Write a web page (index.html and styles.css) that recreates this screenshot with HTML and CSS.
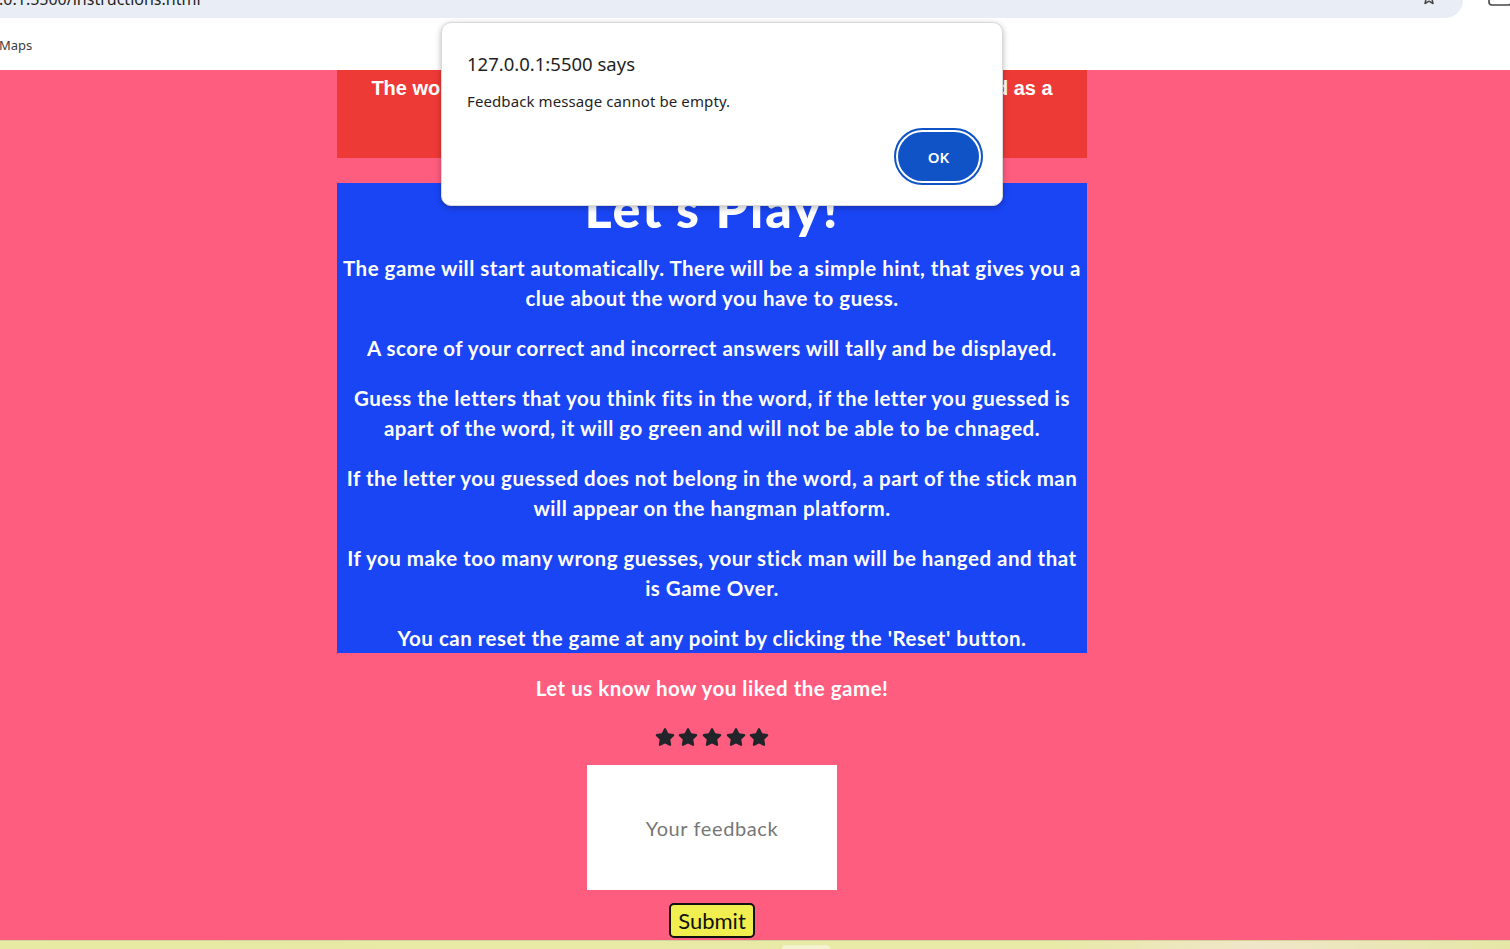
FILE: index.html
```html
<!DOCTYPE html>
<html lang="en">
<head>
<meta charset="utf-8">
<title>Instructions</title>
<link rel="stylesheet" href="styles.css">
</head>
<body>
<div class="screen">
  <div class="toolbar">
    <div class="omnibox">
      <span class="url">.0.1:5500/instructions.html</span>
      <svg class="bookmark-star" viewBox="0 0 16 16" aria-hidden="true"><path d="M8 1.5l1.9 4.1 4.5.5-3.4 3 1 4.4L8 11.2l-4 2.3 1-4.4-3.4-3 4.5-.5z" fill="none" stroke="#474747" stroke-width="1.5" stroke-linejoin="round"/></svg>
    </div>
    <svg class="side-icon" viewBox="0 0 22 18" aria-hidden="true"><rect x="1" y="-8" width="22" height="13" rx="3" fill="none" stroke="#474747" stroke-width="1.6"/></svg>
  </div>
  <div class="bookmarks"><span class="bookmark">Maps</span></div>

  <main class="page">
    <section class="intro">
      <p>The word that you need to guess will then be hidden and displayed as a<br>series of blank dashes.</p>
    </section>

    <section class="rules">
      <h1>Let's Play!</h1>
      <p>The game will start automatically. There will be a simple hint, that gives you a<br>clue about the word you have to guess.</p>
      <p>A score of your correct and incorrect answers will tally and be displayed.</p>
      <p>Guess the letters that you think fits in the word, if the letter you guessed is<br>apart of the word, it will go green and will not be able to be chnaged.</p>
      <p>If the letter you guessed does not belong in the word, a part of the stick man<br>will appear on the hangman platform.</p>
      <p>If you make too many wrong guesses, your stick man will be hanged and that<br>is Game Over.</p>
      <p>You can reset the game at any point by clicking the 'Reset' button.</p>
    </section>

    <p class="ask">Let us know how you liked the game!</p>

    <div class="stars">
      <svg class="star" viewBox="0 0 576 512" aria-hidden="true"><path d="M259.3 17.8L194 150.2 47.9 171.5c-26.2 3.8-36.7 36.1-17.7 54.6l105.7 103-25 145.5c-4.5 26.3 23.2 46 46.4 33.7L288 439.6l130.7 68.7c23.2 12.2 50.9-7.4 46.4-33.7l-25-145.5 105.7-103c19-18.5 8.5-50.8-17.7-54.6L382 150.2 316.7 17.8c-11.7-23.6-45.6-23.9-57.4 0z"/></svg>
      <svg class="star" viewBox="0 0 576 512" aria-hidden="true"><path d="M259.3 17.8L194 150.2 47.9 171.5c-26.2 3.8-36.7 36.1-17.7 54.6l105.7 103-25 145.5c-4.5 26.3 23.2 46 46.4 33.7L288 439.6l130.7 68.7c23.2 12.2 50.9-7.4 46.4-33.7l-25-145.5 105.7-103c19-18.5 8.5-50.8-17.7-54.6L382 150.2 316.7 17.8c-11.7-23.6-45.6-23.9-57.4 0z"/></svg>
      <svg class="star" viewBox="0 0 576 512" aria-hidden="true"><path d="M259.3 17.8L194 150.2 47.9 171.5c-26.2 3.8-36.7 36.1-17.7 54.6l105.7 103-25 145.5c-4.5 26.3 23.2 46 46.4 33.7L288 439.6l130.7 68.7c23.2 12.2 50.9-7.4 46.4-33.7l-25-145.5 105.7-103c19-18.5 8.5-50.8-17.7-54.6L382 150.2 316.7 17.8c-11.7-23.6-45.6-23.9-57.4 0z"/></svg>
      <svg class="star" viewBox="0 0 576 512" aria-hidden="true"><path d="M259.3 17.8L194 150.2 47.9 171.5c-26.2 3.8-36.7 36.1-17.7 54.6l105.7 103-25 145.5c-4.5 26.3 23.2 46 46.4 33.7L288 439.6l130.7 68.7c23.2 12.2 50.9-7.4 46.4-33.7l-25-145.5 105.7-103c19-18.5 8.5-50.8-17.7-54.6L382 150.2 316.7 17.8c-11.7-23.6-45.6-23.9-57.4 0z"/></svg>
      <svg class="star" viewBox="0 0 576 512" aria-hidden="true"><path d="M259.3 17.8L194 150.2 47.9 171.5c-26.2 3.8-36.7 36.1-17.7 54.6l105.7 103-25 145.5c-4.5 26.3 23.2 46 46.4 33.7L288 439.6l130.7 68.7c23.2 12.2 50.9-7.4 46.4-33.7l-25-145.5 105.7-103c19-18.5 8.5-50.8-17.7-54.6L382 150.2 316.7 17.8c-11.7-23.6-45.6-23.9-57.4 0z"/></svg>
    </div>

    <form class="feedback">
      <textarea class="feedback-box" placeholder="Your feedback"></textarea>
      <button type="button" class="submit">Submit</button>
    </form>
  </main>

  <div class="taskbar"><span class="task-pill"></span></div>

  <div class="alert" role="alertdialog">
    <div class="alert-title">127.0.0.1:5500 says</div>
    <div class="alert-msg">Feedback message cannot be empty.</div>
    <div class="alert-actions"><button type="button" class="ok">OK</button></div>
  </div>
</div>
</body>
</html>
```
FILE: styles.css
```css
* { box-sizing: border-box; }
html, body { margin: 0; padding: 0; }
body {
  font-family: "Lato", "Liberation Sans", sans-serif;
  background: #ffffff;
}
.screen {
  position: relative;
  width: 1510px;
  height: 949px;
  display: flex;
  flex-direction: column;
  overflow: hidden;
}

/* browser chrome */
.toolbar {
  flex: none;
  height: 18px;
  display: flex;
  align-items: flex-start;
  overflow: hidden;
}
.omnibox {
  width: 1463px;
  height: 18px;
  background: #e9eef6;
  border-bottom-right-radius: 18px;
  display: flex;
  align-items: flex-start;
  overflow: hidden;
}
.url {
  flex: 1;
  font-family: "Noto Sans", "Open Sans", sans-serif;
  font-size: 16px;
  line-height: 18px;
  color: #1f1f1f;
  white-space: nowrap;
  margin-top: -10px;
  margin-left: -1px;
}
.bookmark-star {
  width: 16px;
  height: 16px;
  margin-top: -10px;
  margin-right: 26px;
}
.side-icon {
  width: 22px;
  height: 18px;
  margin-left: 25px;
}
.bookmarks {
  flex: none;
  height: 52px;
  display: flex;
  align-items: center;
  padding-top: 2px;
}
.bookmark {
  font-family: "Noto Sans", "Open Sans", sans-serif;
  font-size: 13px;
  line-height: 16px;
  color: #3c3c3c;
  margin-left: -1px;
}

/* page */
.page {
  flex: 1;
  min-height: 0;
  background: #ff5d80;
  display: flex;
  flex-direction: column;
  align-items: center;
  overflow: hidden;
  padding-right: 86px;
}
.intro {
  width: 750px;
  height: 88px;
  background: #ee3a36;
  color: #ffffff;
  text-align: center;
  padding-top: 6px;
}
.intro p {
  margin: 0;
  font-family: "Liberation Sans", Arial, sans-serif;
  font-weight: 700;
  font-size: 20px;
  line-height: 24px;
}
.rules {
  width: 750px;
  margin-top: 25px;
  background: #1a45f5;
  color: #ffffff;
  text-align: center;
  padding: 0 4px;
}
.rules h1 {
  margin: 0 0 20px;
  font-size: 52px;
  line-height: 50px;
  font-weight: 900;
  letter-spacing: 2px;
}
.rules p {
  margin: 20px 0;
  font-size: 20.5px;
  line-height: 30px;
  font-weight: 700;
  letter-spacing: 0.5px;
  white-space: nowrap;
}
.rules p:last-child { margin-bottom: 0; }
.ask {
  margin: 20px 0 0;
  color: #ffffff;
  font-size: 20.5px;
  line-height: 30px;
  font-weight: 700;
  letter-spacing: 0.5px;
}
.stars {
  margin-top: 25px;
  display: flex;
  gap: 3.7px;
}
.star {
  width: 20px;
  height: 18px;
  fill: #212529;
}
.feedback {
  display: flex;
  flex-direction: column;
  align-items: center;
}
.feedback-box {
  margin-top: 19px;
  width: 250px;
  height: 125px;
  border: none;
  resize: none;
  padding: 51px 10px 0;
  font-family: "Lato", sans-serif;
  font-weight: 400;
  font-size: 20px;
  line-height: 24px;
  letter-spacing: 0.6px;
  text-align: center;
  background: #ffffff;
  outline: none;
}
.feedback-box::placeholder { color: #777777; }
.submit {
  margin-top: 13px;
  width: 86px;
  height: 35px;
  padding: 0;
  border: 2px solid #111111;
  border-radius: 5px;
  background: #f1ef4f;
  color: #111111;
  font-family: "Lato", sans-serif;
  font-size: 22px;
  line-height: 28px;
}

/* taskbar */
.taskbar {
  flex: none;
  height: 9px;
  background: linear-gradient(90deg, #e6eaa2 0%, #e9e9a8 70%, #efe6c9 83%, #e6e7a6 100%);
  border-top: 1px solid #d2d39a;
  display: flex;
}
.task-pill {
  margin-left: 782px;
  margin-top: 4px;
  width: 48px;
  height: 10px;
  border-radius: 4px;
  background: #f3f3cf;
}

/* alert dialog */
.alert {
  position: absolute;
  left: 441px;
  top: 22px;
  width: 562px;
  height: 184px;
  background: #ffffff;
  border: 1px solid #d9d9d9;
  border-radius: 10px;
  box-shadow: 0 2px 6px rgba(0, 0, 0, 0.28);
  padding: 29px 23px 0 25px;
  font-family: "Noto Sans", "Open Sans", sans-serif;
  color: #1f1f1f;
}
.alert-title {
  font-size: 18.5px;
  line-height: 24px;
}
.alert-msg {
  margin-top: 15px;
  font-size: 15px;
  line-height: 20px;
  letter-spacing: 0.1px;
}
.alert-actions {
  display: flex;
  justify-content: flex-end;
  margin-top: 21px;
}
.ok {
  width: 81px;
  height: 49px;
  border: none;
  border-radius: 25px;
  background: #0f53c6;
  color: #ffffff;
  outline: 2px solid #0f53c6;
  outline-offset: 2px;
  font-family: "Noto Sans", "Open Sans", sans-serif;
  font-weight: 600;
  font-size: 15px;
  padding: 0;
}
```
